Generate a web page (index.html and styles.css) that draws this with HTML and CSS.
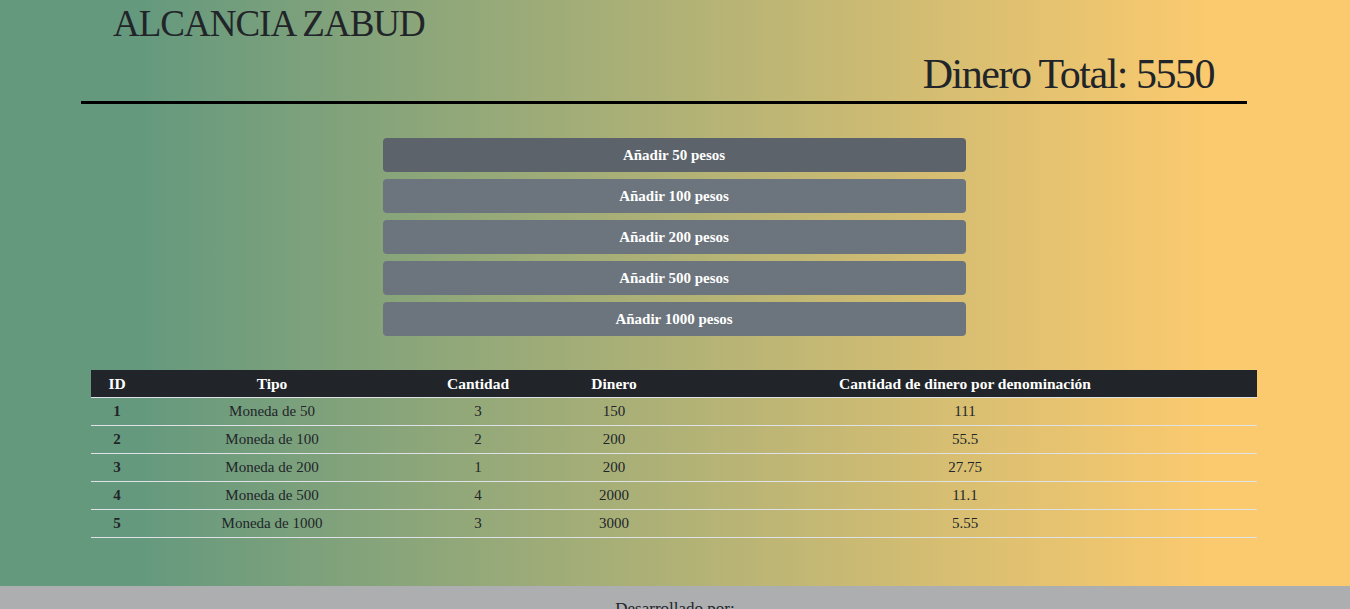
FILE: index.html
```html
<!DOCTYPE html>
<html lang="es">
<head>
<meta charset="utf-8">
<title>Alcancia Zabud</title>
<link rel="stylesheet" href="styles.css">
</head>
<body>
<main class="page">
  <header class="header">
    <h1 class="title">ALCANCIA ZABUD</h1>
    <h2 class="total">Dinero Total: 5550</h2>
  </header>
  <section class="buttons">
    <button class="btn btn-active">Añadir 50 pesos</button>
    <button class="btn">Añadir 100 pesos</button>
    <button class="btn">Añadir 200 pesos</button>
    <button class="btn">Añadir 500 pesos</button>
    <button class="btn">Añadir 1000 pesos</button>
  </section>
  <table class="table">
    <thead>
      <tr>
        <th class="c-id">ID</th>
        <th class="c-tipo">Tipo</th>
        <th class="c-cant">Cantidad</th>
        <th class="c-din">Dinero</th>
        <th class="c-den">Cantidad de dinero por denominación</th>
      </tr>
    </thead>
    <tbody>
      <tr><th>1</th><td>Moneda de 50</td><td>3</td><td>150</td><td>111</td></tr>
      <tr><th>2</th><td>Moneda de 100</td><td>2</td><td>200</td><td>55.5</td></tr>
      <tr><th>3</th><td>Moneda de 200</td><td>1</td><td>200</td><td>27.75</td></tr>
      <tr><th>4</th><td>Moneda de 500</td><td>4</td><td>2000</td><td>11.1</td></tr>
      <tr><th>5</th><td>Moneda de 1000</td><td>3</td><td>3000</td><td>5.55</td></tr>
    </tbody>
  </table>
</main>
<footer class="footer">
  <p class="footer-text">Desarrollado por:</p>
</footer>
</body>
</html>
```
FILE: styles.css
```css
html, body {
  margin: 0;
  padding: 0;
  height: 609px;
  overflow: hidden;
}
body {
  font-family: "Liberation Serif", "Times New Roman", serif;
  color: #212529;
}
.page {
  background: linear-gradient(90deg, #64997e 10%, #fcca6e 90%);
  padding-bottom: 48px;
}
.header {
  width: 1166px;
  margin: 0 auto;
  position: relative;
  left: -11px;
  border-bottom: 3px solid #000;
  padding-bottom: 2px;
}
.title {
  margin: 0 0 0 32px;
  padding-top: 2px;
  font-size: 37px;
  font-weight: normal;
  line-height: 44px;
  letter-spacing: -1px;
}
.total {
  margin: 2px 33px 0 0;
  padding-top: 2px;
  text-align: right;
  font-size: 42px;
  font-weight: normal;
  line-height: 49px;
  letter-spacing: -1.5px;
}
.buttons {
  width: 583px;
  margin: 34px auto 0;
  position: relative;
  left: -1px;
  display: flex;
  flex-direction: column;
  gap: 7px;
}
.btn {
  height: 34px;
  border: 0;
  border-radius: 4px;
  background: #6c757d;
  color: #fff;
  font-family: inherit;
  font-size: 15px;
  font-weight: bold;
  padding: 0;
}
.btn-active {
  background: #5c636a;
}
.table {
  width: 1166px;
  margin: 34px auto 0;
  position: relative;
  left: -1px;
  border-collapse: collapse;
  table-layout: fixed;
  font-size: 15px;
}
.table th, .table td {
  height: 27px;
  padding: 0;
  text-align: center;
  border-bottom: 1px solid #dee2e6;
}
.table thead th {
  background: #212529;
  color: #fff;
  font-weight: bold;
  font-size: 15.5px;
}
.c-id { width: 52px; }
.c-tipo { width: 258px; }
.c-cant { width: 154px; }
.c-din { width: 118px; }
.table tbody th {
  font-weight: bold;
}
.footer {
  background: #adaeb0;
  padding-top: 13px;
  text-align: center;
}
.footer-text {
  margin: 0;
  font-size: 17px;
}
```
